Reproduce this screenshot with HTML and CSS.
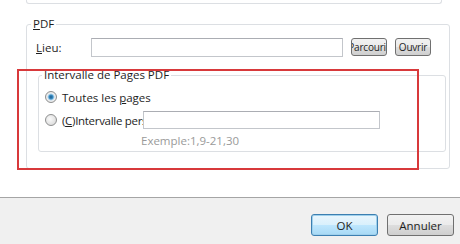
FILE: index.html
```html
<!DOCTYPE html>
<html lang="fr">
<head>
    <meta charset="UTF-8">
    <title>Exporter en PDF</title>
    <link rel="stylesheet" href="styles.css">
</head>
<body>
<div class="dialog">
    <div class="content">
        <div class="prev-group"></div>

        <fieldset class="group pdf-group">
            <legend><u>P</u>DF</legend>
            <div class="path-row">
                <label class="path-label" for="path"><u>L</u>ieu:</label>
                <input class="text-input path-input" id="path" type="text">
                <button class="btn small-btn clipped">Parcourir</button>
                <button class="btn small-btn">Ouvrir</button>
            </div>

            <fieldset class="group range-group">
                <legend>Intervalle de Pages PDF</legend>
                <label class="radio-row">
                    <input type="radio" name="range" checked>
                    <span>Toutes les <u>p</u>ages</span>
                </label>
                <div class="radio-row">
                    <input type="radio" name="range">
                    <span class="range-label">(<u>C</u>)Intervalle personnalisé</span>
                    <input class="text-input range-input" type="text">
                </div>
                <p class="hint">Exemple:1,9-21,30</p>
            </fieldset>
        </fieldset>

        <!-- annotation drawn over the screenshot -->
        <div class="highlight"></div>
    </div>

    <div class="footer">
        <button class="btn footer-btn default">OK</button>
        <button class="btn footer-btn">Annuler</button>
    </div>
</div>
</body>
</html>
```

FILE: styles.css
```css
body {
    margin: 0;
    background-color: #fff;
    font-family: "Open Sans", "Noto Sans", sans-serif;
    font-size: 11.5px;
    color: #1e1e1e;
}

.dialog {
    width: 460px;
    height: 244px;
    display: flex;
    flex-direction: column;
}

.content {
    position: relative;
    height: 197px;
    padding: 0 18px 0 26px;
}

.prev-group {
    height: 3px;
    border: 1px solid #dcdfe3;
    border-top: none;
    border-radius: 0 0 3px 3px;
}

.group {
    margin: 0;
    border: 1px solid #dcdfe3;
    border-radius: 3px;
}

.group legend {
    padding: 0 2px;
    line-height: 14px;
}

.pdf-group {
    margin-top: 13px;
    height: 152px;
    padding: 6px 10px 0 9px;
    box-sizing: border-box;
}

.pdf-group > legend {
    margin-left: -5px;
}

.path-row {
    display: flex;
    align-items: center;
    height: 20px;
}

.path-label {
    width: 55px;
}

.text-input {
    box-sizing: border-box;
    margin: 0;
    border: 1px solid #c3c6cb;
    border-top-color: #abadb3;
    background: #fff;
    font: inherit;
}

.path-input {
    width: 252px;
    height: 19px;
    margin-right: 8px;
}

.btn {
    box-sizing: border-box;
    margin: 0;
    padding: 0;
    border: 1px solid #707070;
    border-radius: 3px;
    background: linear-gradient(#f2f2f2 0%, #ebebeb 50%, #dddddd 51%, #cfcfcf 100%);
    font: inherit;
    color: #1e1e1e;
    white-space: nowrap;
    overflow: hidden;
    display: flex;
    align-items: center;
    justify-content: center;
}

.small-btn {
    width: 36px;
    height: 18px;
    margin-right: 8px;
    font-size: 10px;
    letter-spacing: -0.2px;
}

.range-group {
    margin: 11px -7px 0 2px;
    height: 84px;
    padding: 5px 0 0 5px;
    box-sizing: border-box;
}

.range-group > legend {
    margin-left: -2px;
}

.radio-row {
    display: flex;
    align-items: center;
    height: 20px;
    margin-bottom: 3px;
}

.radio-row input[type="radio"] {
    appearance: none;
    width: 12px;
    height: 12px;
    margin: 0 5px 0 1px;
    border: 1px solid #8e8f8f;
    border-radius: 50%;
    background: radial-gradient(circle at 40% 40%, #fafafa 0%, #e3e3e3 60%, #cfcfcf 100%);
    flex: none;
}

.radio-row input[type="radio"]:checked {
    background: radial-gradient(circle, #1d5b8a 0%, #3a8ec4 28%, #9cc8e6 40%, #f0f0f0 55%, #d6d6d6 100%);
}

.range-label {
    width: 81px;
    overflow: hidden;
    white-space: nowrap;
    letter-spacing: -0.3px;
}

.range-input {
    width: 237px;
    height: 18px;
}

.hint {
    margin: 3px 0 0 97px;
    color: #9a9a9a;
}

.highlight {
    position: absolute;
    left: 17px;
    top: 69px;
    width: 402px;
    height: 101px;
    box-sizing: border-box;
    border: 2px solid #d8393b;
}

.footer {
    flex: 1;
    border-top: 1px solid #a5a5a5;
    background-color: #f0f0f0;
    display: flex;
    justify-content: flex-end;
    align-items: flex-start;
    gap: 9px;
    padding: 16px 6px 0 0;
}

.footer-btn {
    width: 67px;
    height: 22px;
}

.footer-btn.default {
    border-color: #3c7fb1;
    box-shadow: inset 0 0 0 1px #9fd0ec;
    background: linear-gradient(#eaf6fd 0%, #d9f0fc 50%, #bee6fd 51%, #a7d9f5 100%);
}
```
